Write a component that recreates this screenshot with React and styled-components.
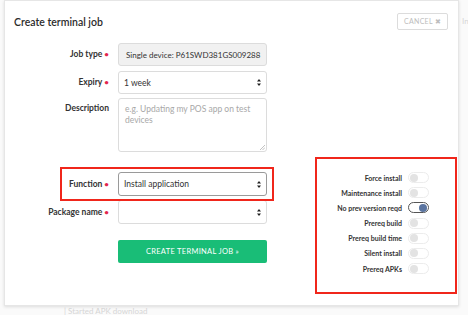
import React from "react";
import styled, { createGlobalStyle } from "styled-components";

const GlobalStyle = createGlobalStyle`
  html, body {
    margin: 0;
    padding: 0;
    background: #fafafa;
    font-family: Lato, "Open Sans", sans-serif;
    color: #333;
  }
`;

const Page = styled.div`
  position: relative;
  width: 468px;
  height: 315px;
  overflow: hidden;
  background: #fafafa;
`;

const BackText = styled.div`
  position: absolute;
  left: ${(p) => p.left}px;
  top: ${(p) => p.top}px;
  font-size: 8px;
  color: #d6d6d6;
  white-space: nowrap;
`;

const Modal = styled.div`
  position: absolute;
  left: 4px;
  top: 0;
  width: 455px;
  height: 306px;
  background: #fff;
  border: 1px solid #e6e6e6;
  box-shadow: 0 1px 3px rgba(0, 0, 0, 0.12);
  box-sizing: border-box;
`;

const Header = styled.div`
  display: flex;
  align-items: center;
  justify-content: space-between;
  padding: 11px 10px 0 9px;
  height: 19px;
`;

const Title = styled.h1`
  margin: 0;
  font-size: 10.5px;
  font-weight: 600;
  color: #2b2b2b;
`;

const CancelButton = styled.button`
  width: 51px;
  height: 17px;
  border: 1px solid #dcdcdc;
  border-radius: 2px;
  background: #fff;
  color: #bdbdbd;
  font-family: inherit;
  font-size: 7px;
  letter-spacing: 0.3px;
  padding: 0;
`;

const Body = styled.div`
  position: relative;
  display: flex;
  align-items: flex-start;
  padding-top: 12px;
`;

const Form = styled.div`
  position: relative;
  display: grid;
  grid-template-columns: 104px 149px;
  column-gap: 9px;
  align-items: start;
`;

const Label = styled.div`
  text-align: right;
  font-size: 8.5px;
  font-weight: 700;
  color: #333;
  line-height: ${(p) => p.h || 23}px;
  margin-top: ${(p) => p.mt || 0}px;
`;

const Star = styled.span`
  color: #e2264d;
  font-size: 8px;
  margin-left: 2px;
`;

const Field = styled.div`
  display: flex;
  align-items: center;
  justify-content: space-between;
  box-sizing: border-box;
  height: ${(p) => p.h || 23}px;
  margin-top: ${(p) => p.mt || 0}px;
  padding: 0 5px 0 ${(p) => (p.muted ? 7 : 5)}px;
  border: 1px solid ${(p) => (p.dark ? "#9a9a9a" : "#dcdcdc")};
  border-radius: 3px;
  background: ${(p) => (p.muted ? "#f1f1f1" : "#fff")};
  font-size: ${(p) => (p.muted ? 8 : 8.5)}px;
  color: #333;
  white-space: nowrap;
  overflow: hidden;
`;

const TextArea = styled.div`
  position: relative;
  box-sizing: border-box;
  height: 54px;
  margin-top: 4px;
  padding: 5px 6px;
  border: 1px solid #dcdcdc;
  border-radius: 3px;
  font-size: 8.5px;
  line-height: 11px;
  color: #a8a8a8;
`;

const Grip = styled.svg`
  position: absolute;
  right: 1px;
  bottom: 1px;
`;

const Highlight = styled.div`
  position: absolute;
  left: 55px;
  top: 124px;
  width: 214px;
  height: 34px;
  border: 2px solid #f0261b;
  box-sizing: border-box;
  pointer-events: none;
`;

const SubmitButton = styled.button`
  grid-column: 2;
  margin-top: 16px;
  height: 23px;
  border: none;
  border-radius: 2px;
  background: #19bd77;
  color: #fff;
  font-family: inherit;
  font-size: 7.5px;
  letter-spacing: 0.3px;
`;

const TogglePanel = styled.div`
  margin-left: 48px;
  margin-top: 114px;
  width: 142px;
  height: 137px;
  box-sizing: border-box;
  border: 2px solid #f0261b;
  padding: 13px 0 0 0;
  display: flex;
  flex-direction: column;
  gap: 4.2px;
`;

const ToggleRow = styled.div`
  display: flex;
  align-items: center;
  justify-content: flex-end;
  gap: 6px;
  padding-right: 26px;
  height: 11px;
`;

const ToggleLabel = styled.span`
  font-size: 7px;
  font-weight: 700;
  color: #333;
`;

const Track = styled.div`
  position: relative;
  width: 21px;
  height: 11px;
  box-sizing: border-box;
  border-radius: 6px;
  border: 1px solid ${(p) => (p.on ? "#555" : "#ececec")};
  background: #fff;
`;

const Knob = styled.div`
  position: absolute;
  top: 0.5px;
  left: ${(p) => (p.on ? "10px" : "0.5px")};
  width: 8px;
  height: 8px;
  border-radius: 50%;
  background: ${(p) => (p.on ? "#5a74a0" : "#e3e3e3")};
`;

const Arrows = () => (
  <svg width="4" height="7" viewBox="0 0 4 7">
    <path d="M2 0 L4 2.6 H0 Z M2 7 L4 4.4 H0 Z" fill="#222" />
  </svg>
);

const toggles = [
  ["Force install", false],
  ["Maintenance install", false],
  ["No prev version reqd", true],
  ["Prereq build", false],
  ["Prereq build time", false],
  ["Silent install", false],
  ["Prereq APKs", false],
];

function App() {
  return (
    <Page>
      <GlobalStyle />
      <BackText left={462} top={16}>In</BackText>
      <BackText left={64} top={306}>|  Started APK download</BackText>
      <Modal>
        <Header>
          <Title>Create terminal job</Title>
          <CancelButton>CANCEL ✖</CancelButton>
        </Header>
        <Body>
          <Form>
            <Label>
              Job type<Star>•</Star>
            </Label>
            <Field muted>Single device: P61SWD381GS009288</Field>

            <Label mt={5}>
              Expiry<Star>•</Star>
            </Label>
            <Field mt={5}>
              1 week
              <Arrows />
            </Field>

            <Label mt={4} h={20}>
              Description
            </Label>
            <TextArea>
              e.g. Updating my POS app on test devices
              <Grip width="5" height="5" viewBox="0 0 5 5">
                <path d="M5 0 L0 5 M5 2.5 L2.5 5" stroke="#999" strokeWidth="0.6" />
              </Grip>
            </TextArea>

            <Label mt={20} h={24}>
              Function<Star>•</Star>
            </Label>
            <Field mt={20} h={24} dark>
              Install application
              <Arrows />
            </Field>

            <Label mt={4} h={24}>
              Package name<Star>•</Star>
            </Label>
            <Field mt={4} h={24}>
              <span />
              <Arrows />
            </Field>

            <SubmitButton>CREATE TERMINAL JOB »</SubmitButton>
            <Highlight />
          </Form>
          <TogglePanel>
            {toggles.map(([name, on]) => (
              <ToggleRow key={name}>
                <ToggleLabel>{name}</ToggleLabel>
                <Track on={on}>
                  <Knob on={on} />
                </Track>
              </ToggleRow>
            ))}
          </TogglePanel>
        </Body>
      </Modal>
    </Page>
  );
}

export default App;
